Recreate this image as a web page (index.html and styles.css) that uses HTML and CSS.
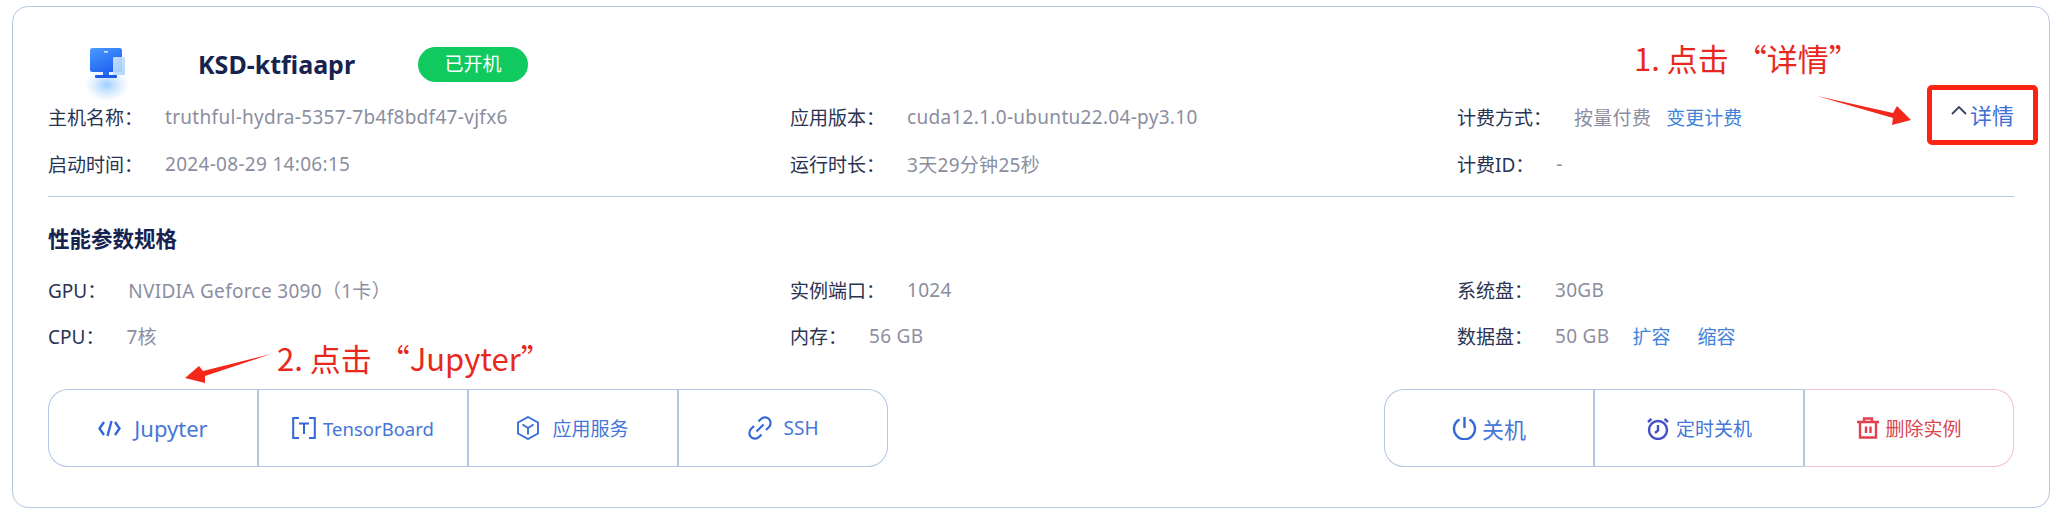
FILE: index.html
```html
<!DOCTYPE html>
<html lang="zh-CN">
<head>
<meta charset="utf-8">
<title>实例详情</title>
<link rel="stylesheet" href="styles.css">
</head>
<body>
<main class="card">
  <header class="head">
    <svg class="pc" viewBox="0 0 40 35" aria-hidden="true">
      <defs>
        <linearGradient id="pcg" x1="0" y1="0" x2="0.6" y2="1">
          <stop offset="0" stop-color="#4a9bff"/>
          <stop offset="1" stop-color="#1f63f0"/>
        </linearGradient>
        <linearGradient id="pcp" x1="0" y1="0" x2="1" y2="1">
          <stop offset="0" stop-color="#d5e8ff"/>
          <stop offset="1" stop-color="#a8d0fb"/>
        </linearGradient>
        <radialGradient id="pcglow">
          <stop offset="0" stop-color="#8cc4ff" stop-opacity=".85"/>
          <stop offset="1" stop-color="#bcdcff" stop-opacity="0"/>
        </radialGradient>
      </defs>
      <ellipse cx="17" cy="38" rx="23" ry="17" fill="url(#pcglow)"/>
      <rect x="0" y="1" width="32" height="24" rx="2.5" fill="url(#pcg)"/>
      <rect x="14" y="4" width="4" height="1.6" fill="#cfe4ff"/>
      <rect x="13" y="25" width="6" height="4" fill="#2a6af0"/>
      <rect x="5" y="28" width="22" height="3" rx="1" fill="#1f5ae6"/>
      <rect x="23" y="10" width="12" height="18" rx="1" fill="url(#pcp)" opacity=".9"/>
    </svg>
    <h1 class="name">KSD-ktfiaapr</h1>
    <span class="pill">已开机</span>
  </header>

  <section class="grid top">
    <div class="item"><span class="k">主机名称：</span><span class="v">truthful-hydra-5357-7b4f8bdf47-vjfx6</span></div>
    <div class="item"><span class="k">应用版本：</span><span class="v">cuda12.1.0-ubuntu22.04-py3.10</span></div>
    <div class="item"><span class="k">计费方式：</span><span class="v">按量付费</span><a class="lnk first">变更计费</a></div>
    <div class="detail"><svg class="caret" viewBox="0 0 16 10" aria-hidden="true"><path d="M1 9L8 2L15 9"/></svg><span>详情</span></div>
    <div class="item"><span class="k">启动时间：</span><span class="v">2024-08-29 14:06:15</span></div>
    <div class="item"><span class="k">运行时长：</span><span class="v">3天29分钟25秒</span></div>
    <div class="item"><span class="k">计费ID：</span><span class="v">-</span></div>
  </section>

  <hr class="rule">
  <h2 class="sec">性能参数规格</h2>

  <section class="grid spec">
    <div class="item"><span class="k">GPU：</span><span class="v">NVIDIA Geforce 3090（1卡）</span></div>
    <div class="item"><span class="k">实例端口：</span><span class="v">1024</span></div>
    <div class="item"><span class="k">系统盘：</span><span class="v">30GB</span></div>
    <div class="item"><span class="k">CPU：</span><span class="v">7核</span></div>
    <div class="item"><span class="k">内存：</span><span class="v">56 GB</span></div>
    <div class="item"><span class="k">数据盘：</span><span class="v">50 GB</span><a class="lnk">扩容</a><a class="lnk wide">缩容</a></div>
  </section>

  <footer class="actions">
    <div class="group">
      <button class="btn g13 big"><svg class="ic code" viewBox="0 0 23 17"><path d="M6 2L1.5 8.5L6 15M17 2L21.5 8.5L17 15M13.5 1L9.5 16"/></svg>Jupyter</button>
      <button class="btn g7 tight"><svg class="ic tb" viewBox="0 0 24 22"><path d="M7 1H1.2V21H7M17 1H22.8V21H17M7 6.5H17M12 6.5V17"/></svg>TensorBoard</button>
      <button class="btn g13"><svg class="ic cube" viewBox="0 0 22 24"><path d="M11 1L21 6.5V17.5L11 23L1 17.5V6.5ZM5.5 8.5L11 12L16.5 8.5M11 12V18.5"/></svg>应用服务</button>
      <button class="btn g12"><svg class="ic link" viewBox="0 0 24 24"><path d="M8.5 15.5L15.5 8.5M10.5 5.5L13 3A5.6 5.6 0 0 1 21 11L18 14M13.5 18.5L11 21A5.6 5.6 0 0 1 3 13L6 10"/></svg>SSH</button>
    </div>
    <div class="group">
      <button class="btn g5 big"><svg class="ic pow" viewBox="0 0 25 24"><path d="M7.5 3.5A10.5 10.5 0 1 0 17.5 3.5M12.5 1V12"/></svg>关机</button>
      <button class="btn g6"><svg class="ic alarm" viewBox="0 0 24 23"><circle cx="12" cy="13" r="9"/><path d="M12 8V13.5L9 16M2 5L5.5 1.8M22 5L18.5 1.8"/></svg>定时关机</button>
      <button class="btn g5 danger"><svg class="ic trash" viewBox="0 0 24 22"><path d="M1 5H23M8 5V1.5H16V5M4 5V20.5H20V5M10 9.5V16M14.5 9.5V16"/></svg>删除实例</button>
    </div>
  </footer>

  <div class="note note1">1. 点击 “详情”</div>
  <div class="note note2">2. 点击 “Jupyter”</div>
  <div class="mark"></div>
  <svg class="arrow arrow1" viewBox="0 0 94 30" aria-hidden="true"><path d="M0 0L76 17L80 10L94 24L75 29L76 22Z"/></svg>
  <svg class="arrow arrow2" viewBox="0 0 86 30" aria-hidden="true"><path d="M86 0L18 17L14 12L0 24L20 29L20 22Z"/></svg>
</main>
</body>
</html>
```

FILE: styles.css
```css
* { box-sizing: border-box; }
html, body { margin: 0; background: #fff; }
body {
  font-family: "Noto Sans", "Noto Sans CJK SC", sans-serif;
  font-size: 19px;
  color: #2a3352;
}
.card {
  position: relative;
  width: 2038px;
  margin: 6px 0 0 12px;
  padding: 40px 35px 40px 35px;
  border: 1px solid #b3c7e3;
  border-radius: 16px;
}
.head { display: flex; align-items: center; height: 35px; }
.pc { width: 40px; height: 35px; margin-left: 42px; overflow: visible; flex: none; }
.name {
  margin: 0 0 0 68px;
  font-size: 25px;
  line-height: 35px;
  font-weight: 700;
  color: #16234f;
  width: 220px;
}
.pill {
  width: 110px;
  height: 35px;
  border-radius: 18px;
  background: #10c95f;
  color: #fff;
  font-size: 19px;
  line-height: 35px;
  text-align: center;
}
.grid { display: grid; grid-template-columns: 742px 667px 1fr auto; }
.top { margin-top: 11px; grid-auto-rows: 47px; }
.spec { margin-top: 13px; grid-template-columns: 742px 667px 1fr; grid-auto-rows: 46px; }
.item { display: flex; align-items: center; }
.k { margin-right: 22px; color: #2a3352; }
.v { color: #8b8e9f; letter-spacing: .3px; }
.lnk { color: #3f84da; margin-left: 23px; }
.lnk.first { margin-left: 15px; }
.lnk.wide { margin-left: 27px; }
.detail {
  display: flex;
  align-items: center;
  height: 42px;
  gap: 3px;
  color: #3f6fd8;
  font-size: 22px;
}
.caret { width: 16px; height: 10px; margin-top: -8px; fill: none; stroke: #3a4660; stroke-width: 1.8; }
.rule { margin: 9px 0 0; border: 0; border-top: 1px solid #b3c7e3; }
.sec {
  margin: 27px 0 0;
  font-size: 21.5px;
  line-height: 30px;
  font-weight: 700;
  color: #16234f;
}
.actions { display: flex; justify-content: space-between; margin-top: 30px; }
.group { display: flex; }
.btn {
  display: flex;
  align-items: center;
  justify-content: center;
  width: 210px;
  height: 78px;
  padding: 0;
  background: #fff;
  border: 1px solid #b3c7e3;
  border-left-width: 2px;
  border-right-width: 0;
  color: #4576d8;
  font: inherit;
  font-size: 19px;
}
.btn:first-child { width: 209px; border-left-width: 1px; border-radius: 20px 0 0 20px; }
.btn:last-child { width: 211px; border-right-width: 1px; border-radius: 0 20px 20px 0; }
.big { font-size: 22px; }
.tight { font-size: 18.5px; }
.g5 { gap: 5px; } .g6 { gap: 6px; } .g7 { gap: 7px; } .g12 { gap: 12px; } .g13 { gap: 13px; }
.danger { color: #d9454f; border-color: #f1c3c8; border-left-color: #b3c7e3; }
.ic { flex: none; fill: none; stroke: #3268d8; stroke-width: 2; }
.code { width: 23px; height: 17px; stroke-width: 2.4; }
.tb { width: 24px; height: 22px; }
.cube { width: 22px; height: 24px; stroke-width: 1.8; }
.link { width: 24px; height: 24px; stroke-width: 2.2; }
.pow { width: 25px; height: 24px; stroke-width: 2.4; }
.alarm { width: 24px; height: 23px; stroke: #4450c6; stroke-width: 2.4; }
.trash { width: 24px; height: 22px; stroke: #e2404f; stroke-width: 2.4; }
.note {
  position: absolute;
  font-family: "Noto Sans CJK SC", sans-serif;
  color: #e8281c;
  font-size: 31px;
  line-height: 40px;
  white-space: nowrap;
}
.note1 { left: 1621px; top: 31px; }
.note2 { left: 264px; top: 331px; }
.mark {
  position: absolute;
  left: 1914px;
  top: 78px;
  width: 111px;
  height: 60px;
  border: 5px solid #fb2412;
  border-radius: 5px;
}
.arrow { position: absolute; fill: #f3281a; }
.arrow1 { left: 1804px; top: 89px; width: 94px; height: 30px; }
.arrow2 { left: 172px; top: 347px; width: 86px; height: 30px; }
```
